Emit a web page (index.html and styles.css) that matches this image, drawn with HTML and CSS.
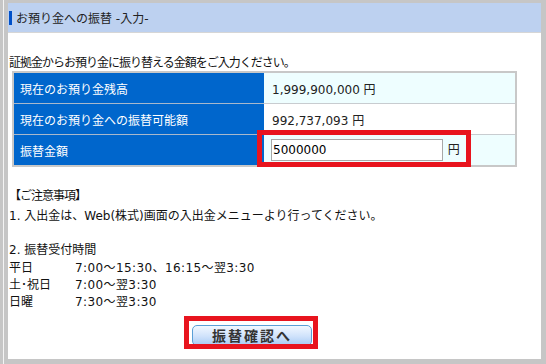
FILE: index.html
```html
<!DOCTYPE html>
<html lang="ja">
<head>
<meta charset="utf-8">
<link rel="stylesheet" href="styles.css">
</head>
<body>
<div class="frame">
  <div class="panel">
    <div class="head"><span class="marker"></span><span class="head-title">お預り金への振替 -入力-</span></div>
    <p class="lead">証拠金からお預り金に振り替える金額をご入力ください。</p>
    <table class="tbl">
      <tr class="alt"><th>現在のお預り金残高</th><td>1,999,900,000 円</td></tr>
      <tr><th>現在のお預り金への振替可能額</th><td>992,737,093 円</td></tr>
      <tr class="alt"><th>振替金額</th><td class="input-cell"><input class="amount" type="text" value="5000000"> 円<span class="mark mark-input"></span></td></tr>
    </table>
    <div class="notes">
      <p class="note-title">【ご注意事項】</p>
      <p class="note-1">1. 入出金は、Web(株式)画面の入出金メニューより行ってください。</p>
      <p class="note-2">2. 振替受付時間</p>
      <div class="hours">
        <span>平日</span><span class="time">7:00～15:30、16:15～翌3:30</span>
        <span>土･祝日</span><span class="time">7:00～翌3:30</span>
        <span>日曜</span><span class="time">7:30～翌3:30</span>
      </div>
    </div>
    <div class="actions">
      <button class="btn" type="button">振替確認へ<span class="mark mark-btn"></span></button>
    </div>
  </div>
</div>
</body>
</html>
```
FILE: styles.css
```css
html, body { margin: 0; padding: 0; }
body {
  background: #c6c6c6;
  width: 546px;
  height: 364px;
  overflow: hidden;
  font-family: "DejaVu Sans", "Noto Sans CJK JP", sans-serif;
  font-size: 12px;
  color: #111;
}
.frame {
  position: relative;
  box-sizing: border-box;
  height: 364px;
  padding: 3px 5px 5px 3px;
}
.frame::before {
  content: "";
  position: absolute;
  left: 3px; top: 0; bottom: 0;
  width: 1px;
  background: #f4f4f4;
}
.panel {
  margin-left: 5px;
  background: #fff;
  height: 356px;
  box-sizing: border-box;
  display: flex;
  flex-direction: column;
}
.head {
  height: 29px;
  background: #bdd1f0;
  border-bottom: 1px solid #d6d6d6;
  display: flex;
  align-items: center;
}
.marker {
  width: 3px;
  height: 14px;
  background: #0050c8;
  margin-left: 1px;
  margin-right: 4px;
}
.head-title { color: #222; font-size: 12px; }
.lead { margin: 23px 0 0 1px; line-height: 15px; letter-spacing: -1px; }
.tbl {
  margin: 0 0 0 4px;
  width: 505px;
  border-collapse: collapse;
  border: 2px solid #c8c8c8;
}
.tbl th, .tbl td {
  height: 30px;
  padding: 0 0 0 6px;
  border-top: 1px solid #c8ccd0;
  text-align: left;
  font-weight: normal;
  white-space: nowrap;
}
.tbl tr:first-child th, .tbl tr:first-child td { border-top: 0; }
.tbl th {
  width: 244px;
  background: #0066cc;
  color: #fff;
  border-top-color: #a8b8cc;
  font-family: "Noto Sans CJK JP", sans-serif;
}
.tbl td { color: #222; background: #fff; padding-left: 8px; }
.tbl tr.alt td { background: #eefeff; }
.input-cell { position: relative; }
.amount {
  width: 172px;
  height: 22px;
  box-sizing: border-box;
  border: 1px solid #a8a8a8;
  padding: 0 1px;
  font-family: "DejaVu Sans", sans-serif;
  font-size: 12px;
  color: #000;
  vertical-align: middle;
  margin: 0 1px 0 -1px;
}
.mark {
  position: absolute;
  border: 5px solid #e8141e;
  box-sizing: border-box;
  pointer-events: none;
}
.mark-input { left: -7px; top: -5px; width: 214px; height: 37px; }
.notes { margin: 21px 0 0 1px; line-height: 16.5px; }
.notes p { margin: 0; }
.note-title { letter-spacing: -1px; }
.note-1 { margin-top: 3px !important; }
.note-2 { margin-top: 18px !important; }
.hours {
  display: grid;
  grid-template-columns: 66px auto;
  line-height: 17px;
  margin-top: 1px;
}
.time { letter-spacing: 0.4px; }
.actions { margin: 14px 0 0 184px; }
.btn {
  position: relative;
  width: 120px;
  height: 21px;
  border: 1px solid #5a9fd6;
  border-radius: 5px;
  background: linear-gradient(#f2f8ff, #cfe2fb 55%, #a9cbf4);
  font-family: "Noto Sans CJK JP", sans-serif;
  font-weight: bold;
  font-size: 14px;
  letter-spacing: 2px;
  color: #333;
  padding: 0;
  line-height: 19px;
}
.mark-btn { left: -9px; top: -10px; width: 134px; height: 33px; }
```
